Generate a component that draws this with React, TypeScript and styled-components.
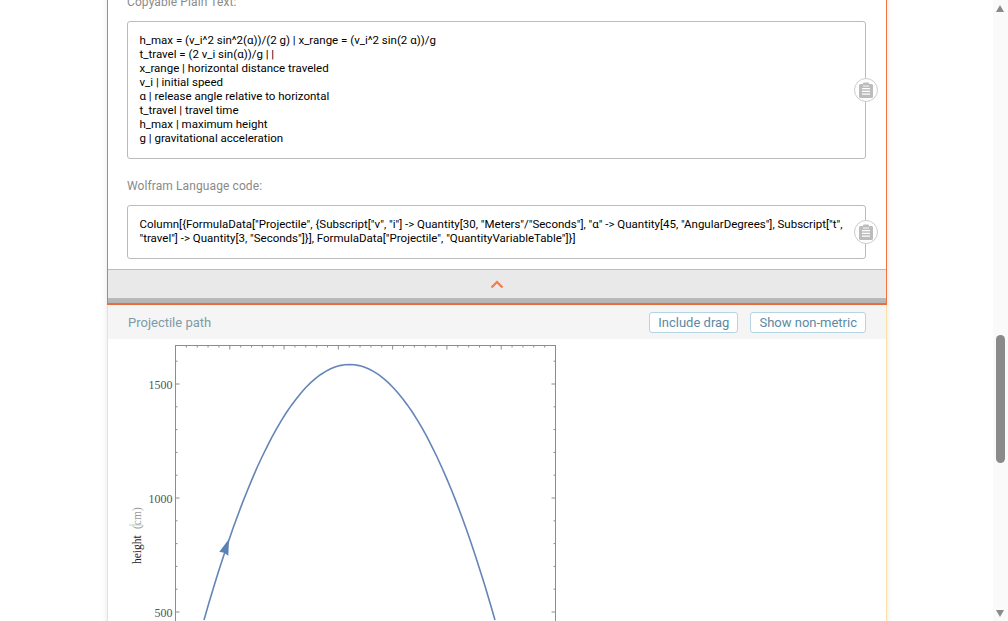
import React from 'react';
import styled, { createGlobalStyle } from 'styled-components';

const GlobalStyle = createGlobalStyle`
  html, body {
    margin: 0;
    height: 100%;
    overflow: hidden;
    background: #ffffff;
    font-family: Roboto, "Liberation Sans", sans-serif;
  }
`;

const plainText = [
  'h_max = (v_i^2 sin^2(α))/(2 g) | x_range = (v_i^2 sin(2 α))/g',
  't_travel = (2 v_i sin(α))/g | |',
  'x_range | horizontal distance traveled',
  'v_i | initial speed',
  'α | release angle relative to horizontal',
  't_travel | travel time',
  'h_max | maximum height',
  'g | gravitational acceleration',
];

const wolframCode =
  'Column[{FormulaData["Projectile", {Subscript["v", "i"] -> Quantity[30, "Meters"/"Seconds"], "α" -> Quantity[45, "AngularDegrees"], Subscript["t", "travel"] -> Quantity[3, "Seconds"]}], FormulaData["Projectile", "QuantityVariableTable"]}]';

const PLOT = { left: 47.5, right: 427.5, top: 5.5, bottom: 300 };
const topTicks = Array.from({ length: 36 }, (_, i) => PLOT.left + (i * 380) / 35);
const sideTicks = Array.from({ length: 12 }, (_, i) => 272 - i * 22.8);
const yLabels = [
  { text: '1500', y: 44.5 },
  { text: '1000', y: 158.5 },
  { text: '500', y: 272.5 },
];

const pathPoints = Array.from({ length: 61 }, (_, i) => {
  const x = 76 + (i * 291) / 60;
  const y = 24.5 + 0.01207 * (x - 221.5) ** 2;
  return `${x.toFixed(1)},${y.toFixed(1)}`;
}).join(' ');

const ClipboardIcon = () => (
  <svg width="14" height="16" viewBox="0 0 14 16">
    <path
      fill="#bcbcbc"
      d="M5 0.5h4a1 1 0 0 1 1 1V2h2.5A1.5 1.5 0 0 1 14 3.5v11a1.5 1.5 0 0 1-1.5 1.5h-11A1.5 1.5 0 0 1 0 14.5v-11A1.5 1.5 0 0 1 1.5 2H4v-.5a1 1 0 0 1 1-1z"
    />
    <path fill="#ffffff" d="M3 6h8v1.2H3zM3 8.8h8V10H3zM3 11.6h8v1.2H3z" />
    <path fill="#ffffff" d="M4 3.6h6v.9H4z" />
  </svg>
);

const App: React.FC = () => {
  return (
    <>
      <GlobalStyle />
      <Page>
        <Card>
          <Label $cut>Copyable Plain Text:</Label>
          <CodeBox>
            {plainText.map((line) => (
              <div key={line}>{line}</div>
            ))}
            <CopyButton>
              <ClipboardIcon />
            </CopyButton>
          </CodeBox>
          <Label>Wolfram Language code:</Label>
          <CodeBox>
            {wolframCode}
            <CopyButton>
              <ClipboardIcon />
            </CopyButton>
          </CodeBox>
          <CollapseBar>
            <svg width="14" height="9" viewBox="0 0 14 9">
              <polyline points="1.5,7.5 7,2 12.5,7.5" fill="none" stroke="#f47a4e" strokeWidth="2.2" />
            </svg>
          </CollapseBar>
        </Card>
        <Pod>
          <PodHeader>
            <PodTitle>Projectile path</PodTitle>
            <PodButtons>
              <PodButton>Include drag</PodButton>
              <PodButton>Show non-metric</PodButton>
            </PodButtons>
          </PodHeader>
          <PlotArea>
            <svg width="440" height="282" viewBox="0 0 440 282">
              <rect
                x={PLOT.left}
                y={PLOT.top}
                width={PLOT.right - PLOT.left}
                height={PLOT.bottom}
                fill="none"
                stroke="#8c8c8c"
              />
              {topTicks.map((x, i) => (
                <line
                  key={x}
                  x1={x}
                  x2={x}
                  y1={PLOT.top}
                  y2={PLOT.top + (i % 5 === 0 ? 4 : 2)}
                  stroke="#8c8c8c"
                />
              ))}
              {sideTicks.map((y, i) => (
                <g key={y}>
                  <line
                    x1={PLOT.left}
                    x2={PLOT.left + (i % 5 === 0 ? 4 : 2)}
                    y1={y}
                    y2={y}
                    stroke="#8c8c8c"
                  />
                  <line
                    x1={PLOT.right}
                    x2={PLOT.right - (i % 5 === 0 ? 4 : 2)}
                    y1={y}
                    y2={y}
                    stroke="#8c8c8c"
                  />
                </g>
              ))}
              {yLabels.map((l) => (
                <AxisText key={l.text} x={PLOT.left - 3} y={l.y + 4} textAnchor="end">
                  {l.text}
                </AxisText>
              ))}
              <g transform="translate(13 224) rotate(-90)">
                <AxisName x="0" y="0">
                  height
                </AxisName>
                <AxisUnit x="35" y="0">
                  (cm)
                </AxisUnit>
                <line x1="39" x2="39" y1="-12" y2="2" stroke="#b9d3d9" />
              </g>
              <polyline points={pathPoints} fill="none" stroke="#6485b8" strokeWidth="1.6" />
              <polygon points="101,199 91.3,211.7 96,212.7 100.3,215.7" fill="#5e81b5" />
            </svg>
          </PlotArea>
        </Pod>
        <ScrollTrack>
          <ScrollArrow $up />
          <ScrollThumb />
          <ScrollArrow />
        </ScrollTrack>
      </Page>
    </>
  );
};

const Page = styled.div`
  width: 780px;
  margin: -5px 0 0 107px;
`;

const Card = styled.section`
  box-sizing: border-box;
  background: #ffffff;
  border: solid #f2713e;
  border-width: 0 1.5px 2px;
  box-shadow: 0 0 6px rgba(0, 0, 0, 0.1);
`;

const Label = styled.div<{ $cut?: boolean }>`
  margin: ${(p) => (p.$cut ? '0' : '20px')} 19px 12px;
  font-size: 12px;
  line-height: 14px;
  letter-spacing: 0.1px;
  color: #8a8a8a;
`;

const CodeBox = styled.div`
  position: relative;
  box-sizing: border-box;
  margin: 0 20.5px 0 18.5px;
  padding: 11px 20px 13px 12px;
  border: 1px solid #bbbbbb;
  border-radius: 3px;
  background: #ffffff;
  font-size: 11.5px;
  line-height: 14px;
  color: #000000;
`;

const CopyButton = styled.span`
  position: absolute;
  top: 50%;
  right: -13px;
  box-sizing: border-box;
  width: 24px;
  height: 24px;
  margin-top: -12px;
  display: flex;
  align-items: center;
  justify-content: center;
  border: 1px solid #cccccc;
  border-radius: 50%;
  background: #ffffff;
`;

const CollapseBar = styled.div`
  box-sizing: border-box;
  height: 34px;
  margin-top: 10px;
  display: flex;
  align-items: center;
  justify-content: center;
  border-top: 1px solid #bbbbbb;
  border-bottom: 5px solid #b9b9b9;
  background: #e9e9e9;
`;

const Pod = styled.section`
  box-sizing: border-box;
  height: 340px;
  border: solid #fde0a8;
  border-width: 0 1px;
  background: #ffffff;
  box-shadow: 0 0 6px rgba(0, 0, 0, 0.1);
`;

const PodHeader = styled.div`
  box-sizing: border-box;
  height: 34px;
  padding: 0 20px;
  display: flex;
  align-items: center;
  justify-content: space-between;
  background: #f5f5f5;
`;

const PodTitle = styled.div`
  font-size: 13px;
  color: #7e9aa8;
`;

const PodButtons = styled.div`
  display: flex;
  gap: 12px;
`;

const PodButton = styled.button`
  box-sizing: border-box;
  height: 21px;
  padding: 0 8px;
  border: 1px solid #b3d5e4;
  border-radius: 3px;
  background: #ffffff;
  font-family: inherit;
  font-size: 13px;
  color: #5a8aa2;
`;

const PlotArea = styled.div`
  padding: 1px 0 0 20px;
  line-height: 0;
`;

const AxisText = styled.text`
  font-family: "Liberation Serif", serif;
  font-size: 12px;
  fill: #555555;
`;

const AxisName = styled.text`
  font-family: "Liberation Serif", serif;
  font-size: 11.5px;
  fill: #222222;
`;

const AxisUnit = styled.text`
  font-family: "Liberation Serif", serif;
  font-size: 11.5px;
  fill: #999999;
`;

const ScrollTrack = styled.div`
  position: fixed;
  top: 0;
  right: 0;
  width: 15px;
  height: 100%;
  background: #fafafa;
`;

const ScrollThumb = styled.div`
  position: absolute;
  top: 335px;
  left: 3px;
  width: 9px;
  height: 128px;
  border-radius: 5px;
  background: #8a8a8a;
`;

const ScrollArrow = styled.div<{ $up?: boolean }>`
  position: absolute;
  top: ${(p) => (p.$up ? '5px' : '610px')};
  left: 3px;
  width: 0;
  height: 0;
  border-style: solid;
  border-width: ${(p) => (p.$up ? '0 4.5px 7px' : '7px 4.5px 0')};
  border-color: ${(p) =>
    p.$up ? 'transparent transparent #8a8a8a' : '#8a8a8a transparent transparent'};
`;

export default App;
